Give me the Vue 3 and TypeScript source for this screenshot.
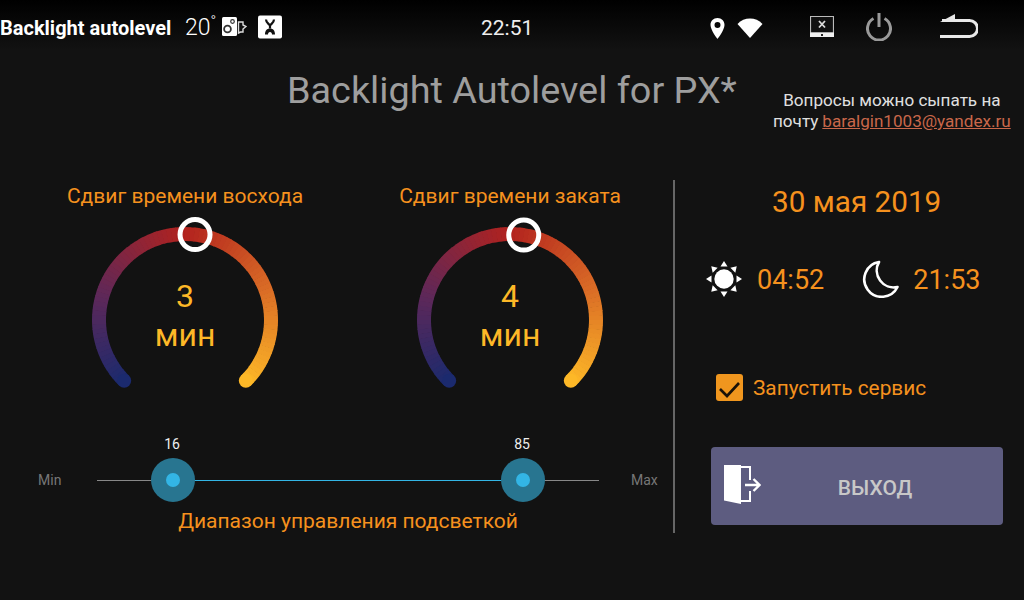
<script setup lang="ts">
interface Gauge {
  title: string;
  value: number;
  thumb: number;
}

const gauges: Gauge[] = [
  { title: 'Сдвиг времени восхода', value: 3, thumb: 6.7 },
  { title: 'Сдвиг времени заката', value: 4, thumb: 9.2 }
];

const CX = 100;
const CY = 100;
const R = 86;

const stops: [number, number[]][] = [
  [0, [27, 42, 110]],
  [0.22, [92, 40, 90]],
  [0.5, [178, 34, 30]],
  [0.75, [217, 106, 38]],
  [1, [253, 184, 39]]
];

function mix(t: number): string {
  for (let i = 1; i < stops.length; i++) {
    const [t1, c1] = stops[i];
    const [t0, c0] = stops[i - 1];
    if (t <= t1) {
      const k = (t - t0) / (t1 - t0);
      const c = c0.map((v, n) => Math.round(v + (c1[n] - v) * k));
      return `rgb(${c[0]},${c[1]},${c[2]})`;
    }
  }
  return 'rgb(253,184,39)';
}

function point(deg: number) {
  const a = (deg * Math.PI) / 180;
  return { x: CX + R * Math.sin(a), y: CY - R * Math.cos(a) };
}

const SEGMENTS = 90;
const segments = Array.from({ length: SEGMENTS }, (_, i) => {
  const from = -135 + (270 * i) / SEGMENTS;
  const to = -135 + (270 * (i + 1)) / SEGMENTS + 0.4;
  const a = point(from);
  const b = point(Math.min(to, 135));
  return {
    d: `M${a.x.toFixed(2)} ${a.y.toFixed(2)}A${R} ${R} 0 0 1 ${b.x.toFixed(2)} ${b.y.toFixed(2)}`,
    color: mix((i + 0.5) / SEGMENTS)
  };
});

const capStart = point(-135);
const capEnd = point(135);
const rays = [0, 45, 90, 135, 180, 225, 270, 315];
</script>

<template>
  <div class="screen">
    <header class="status">
      <span class="app-name">Backlight autolevel</span>
      <span class="temp">20<sup>°</sup></span>
      <svg width="25" height="24" viewBox="0 0 25 24">
        <rect x="0" y="2" width="15" height="19" rx="1.5" fill="#fff" />
        <circle cx="5.5" cy="14" r="3.4" fill="none" stroke="#333" stroke-width="1.8" />
        <circle cx="10.5" cy="6.5" r="1.8" fill="none" stroke="#333" stroke-width="1.2" />
        <path d="M16.5 7h4.500v3l3 1.500-3 2.500v3h-2.500l-2 1z" fill="#111" stroke="#ddd" stroke-width="1.4" />
      </svg>
      <svg class="ic-tool" width="24" height="24" viewBox="0 0 24 24">
        <rect y="0.5" width="24" height="23" rx="2" fill="#fff" />
        <path d="M8 4.500c0 3 2.500 4 4 6 1.500-2 4-3 4-6M12 10.500v3" fill="none" stroke="#111" stroke-width="2.200" />
        <path d="M7 19.500c0-4 2-6 5-6s5 2 5 6h-3c0-1.500-.8-2.500-2-2.500s-2 1-2 2.500z" fill="#111" />
      </svg>
      <span class="clock">22:51</span>
      <svg class="ic-pin" width="15" height="21" viewBox="0 0 15 21">
        <path fill-rule="evenodd" d="M7.500 0C3.400 0 .5 3 .5 7c0 5 7 14 7 14s7-9 7-14c0-4-2.900-7-7-7zM7.500 10a3 3 0 1 1 0-6 3 3 0 0 1 0 6z" fill="#fff" />
      </svg>
      <svg class="ic-wifi" width="26" height="20" viewBox="0 0 26 20">
        <path d="M13 20L.5 6C4 2.300 8.300.5 13 .5s9 1.800 12.500 5.500z" fill="#fff" />
      </svg>
      <svg class="ic-screen" width="24" height="21" viewBox="0 0 24 21">
        <path d="M.5.500h23V17H.5z" fill="#111" stroke="#bbb" stroke-width="1.200" />
        <path d="M0 16.500h24V21H0z" fill="#f0f0f0" />
        <path d="M11 18h2v2h-2z" fill="#222" />
        <path d="M9 5l6 6.500M15 5l-6 6.500" stroke="#ddd" stroke-width="1.800" />
      </svg>
      <svg class="ic-power" width="26" height="28" viewBox="0 0 26 28">
        <path d="M7.500 5.500a11.500 11.500 0 1 0 11 0" fill="none" stroke="#9a9a9a" stroke-width="3" />
        <path d="M13 0v14" stroke="#9a9a9a" stroke-width="3" />
      </svg>
      <svg class="ic-back" width="38" height="26" viewBox="0 0 38 26">
        <path d="M2 6.500h27.500a8 8 0 0 1 0 16H0" fill="none" stroke="#e8e8e8" stroke-width="3" />
        <path d="M15 0v8H0z" fill="#e8e8e8" />
      </svg>
    </header>

    <section class="head">
      <h1 class="title">Backlight Autolevel for PX*</h1>
      <div class="note">
        <span>Вопросы можно сыпать на</span>
        <div class="note-line">
          <span>почту</span>
          <a class="mail">baralgin1003@yandex.ru</a>
        </div>
      </div>
    </section>

    <main class="body">
      <div class="left">
        <div class="gauges">
          <div v-for="g in gauges" :key="g.title" class="gauge">
            <div class="label">{{ g.title }}</div>
            <div class="dial">
              <svg width="200" height="180" viewBox="0 0 200 180">
                <path v-for="(s, i) in segments" :key="i" :d="s.d" fill="none" :stroke="s.color" stroke-width="14" />
                <circle :cx="capStart.x" :cy="capStart.y" r="7" fill="#1b2a6e" />
                <circle :cx="capEnd.x" :cy="capEnd.y" r="7" fill="#fdb827" />
                <circle :cx="point(g.thumb).x" :cy="point(g.thumb).y" r="15" fill="none" stroke="#fff" stroke-width="5" />
              </svg>
              <div class="readout">
                <span class="num">{{ g.value }}</span>
                <span class="unit">мин</span>
              </div>
            </div>
          </div>
        </div>

        <div class="slider">
          <span class="end">Min</span>
          <div class="track">
            <div class="range"></div>
            <div class="thumb low"><span class="thumb-val">16</span></div>
            <div class="thumb high"><span class="thumb-val">85</span></div>
          </div>
          <span class="end max">Max</span>
        </div>
        <div class="label range-label">Диапазон управления подсветкой</div>
      </div>

      <aside class="right">
        <div class="date">30 мая 2019</div>
        <div class="times">
          <svg width="38" height="38" viewBox="0 0 38 38">
            <circle cx="19" cy="19" r="9.700" fill="#fff" />
            <g fill="#fff">
              <path v-for="a in rays" :key="a" d="M15.500 6.500L19 1l3.500 5.500z" :transform="`rotate(${a} 19 19)`" />
            </g>
          </svg>
          <span class="time">04:52</span>
          <svg class="moon" width="38" height="38" viewBox="0 0 38 38">
            <path d="M18 2A17.500 17.500 0 1 0 36.500 27 17 17 0 0 1 18 2z" fill="none" stroke="#fff" stroke-width="2.600" stroke-linejoin="round" />
          </svg>
          <span class="time">21:53</span>
        </div>
        <label class="service">
          <span class="check">
            <svg width="27" height="27" viewBox="0 0 27 27">
              <path d="M4 15l7 7 12-13" fill="none" stroke="#1a1208" stroke-width="2.600" />
            </svg>
          </span>
          Запустить сервис
        </label>
        <button class="exit">
          <svg class="door" width="38" height="40" viewBox="0 0 38 40">
            <path d="M1 0h17v39L1 35.500z" fill="#fff" />
            <path d="M17 2h10v13M27 26v10H18" fill="none" stroke="#fff" stroke-width="2" />
            <path d="M22 20h14M30.500 14l6 6-6 6" fill="none" stroke="#fff" stroke-width="2.400" />
          </svg>
          ВЫХОД
        </button>
      </aside>
    </main>
  </div>
</template>

<style>
html,
body {
  margin: 0;
  background: #121212;
}
</style>

<style scoped>
.screen {
  width: 1024px;
  height: 600px;
  background: #121212;
  font-family: Roboto, "Noto Sans", sans-serif;
  overflow: hidden;
  display: flex;
  flex-direction: column;
}

.status {
  height: 50px;
  box-sizing: border-box;
  padding-top: 4px;
  flex: none;
  display: flex;
  align-items: center;
  color: #fff;
  background: linear-gradient(#000, #121212);
}

.app-name {
  font-size: 20px;
  font-weight: 700;
  width: 185px;
  flex: none;
  white-space: nowrap;
  margin-top: 1px;
}

.temp {
  font-size: 23px;
  font-weight: 300;
  width: 37px;
  flex: none;
  margin-top: 1px;
}

.temp sup {
  font-size: 15px;
  line-height: 0;
}

.ic-tool {
  margin-left: 11px;
}

.clock {
  margin-left: 199px;
  margin-top: 2px;
  width: 52px;
  font-size: 21px;
  color: #eee;
}

.ic-pin {
  margin-left: 177px;
  margin-top: 2px;
}

.ic-wifi {
  margin-left: 12px;
  margin-top: 2px;
}

.ic-screen {
  margin-left: 47px;
  margin-top: -1px;
}

.ic-power {
  margin-left: 32px;
  margin-top: -1px;
}

.ic-back {
  margin-left: 48px;
}

.head {
  height: 130px;
  flex: none;
  display: flex;
  align-items: flex-start;
}

.title {
  margin: 18px 0 0 287px;
  font-size: 37.800px;
  font-weight: 400;
  line-height: 44px;
  color: #9e9e9e;
  white-space: nowrap;
}

.note {
  margin: 40px 0 0 35px;
  width: 240px;
  display: flex;
  flex-direction: column;
  align-items: center;
  font-size: 17.100px;
  line-height: 21px;
  color: #e0e0e0;
}

.note-line {
  display: flex;
  gap: 4px;
}

.mail {
  color: #c9674a;
  text-decoration: underline;
}

.body {
  flex: 1;
  display: flex;
  align-items: flex-start;
}

.left {
  width: 673px;
  flex: none;
  box-sizing: border-box;
  display: flex;
  flex-direction: column;
}

.gauges {
  display: flex;
  width: 100%;
  padding-left: 85px;
  box-sizing: border-box;
  gap: 125px;
}

.gauge {
  width: 200px;
  display: flex;
  flex-direction: column;
  align-items: center;
}

.label {
  font-size: 21px;
  line-height: 32px;
  color: #f5911e;
  white-space: nowrap;
}

.dial {
  position: relative;
  margin-top: 8px;
  height: 180px;
}

.dial svg {
  display: block;
  overflow: visible;
}

.readout {
  position: absolute;
  left: 0;
  right: 0;
  top: 56px;
  display: flex;
  flex-direction: column;
  align-items: center;
  color: #fdb827;
  font-size: 32px;
  line-height: 40px;
}

.unit {
  margin-top: -1px;
}

.slider {
  margin-top: 58px;
  height: 44px;
  display: flex;
  align-items: center;
  padding-left: 38px;
}

.end {
  width: 22px;
  font-size: 14px;
  color: #777;
}

.max {
  width: 30px;
  margin-left: 32px;
}

.track {
  position: relative;
  margin-left: 37px;
  width: 502px;
  height: 1px;
  background: #888;
}

.range {
  position: absolute;
  left: 76px;
  width: 350px;
  top: 0;
  height: 1px;
  background: #33b5e5;
}

.thumb {
  position: absolute;
  top: -22px;
  width: 44px;
  height: 44px;
  border-radius: 50%;
  background: #287590;
}

.thumb::after {
  content: "";
  position: absolute;
  left: 15px;
  top: 15px;
  width: 14px;
  height: 14px;
  border-radius: 50%;
  background: #33b5e5;
}

.low {
  left: 54px;
}

.high {
  left: 404px;
}

.thumb-val {
  position: absolute;
  left: -2px;
  right: 0;
  top: -24px;
  text-align: center;
  font-size: 14px;
  line-height: 20px;
  color: #eee;
}

.range-label {
  margin-top: 3px;
  text-align: center;
  width: 696px;
}

.right {
  flex: 1;
  height: 353px;
  border-left: 2px solid #666;
  box-sizing: border-box;
  display: flex;
  flex-direction: column;
}

.date {
  margin: 2px 0 0 97px;
  font-size: 29.700px;
  line-height: 40px;
  color: #f5911e;
}

.times {
  margin: 38px 0 0 30px;
  display: flex;
  align-items: center;
  color: #f5911e;
}

.time {
  margin-left: 14px;
  margin-top: 2px;
  font-size: 27px;
}

.moon {
  margin-left: 37px;
}

.service {
  margin: 76px 0 0 41px;
  display: flex;
  align-items: center;
  gap: 10px;
  font-size: 20.800px;
  color: #f5911e;
}

.check {
  width: 27px;
  height: 27px;
  border-radius: 3px;
  background: #f0961e;
}

.check svg {
  display: block;
}

.exit {
  position: relative;
  margin: 46px 0 0 36px;
  width: 292px;
  height: 78px;
  border: 0;
  border-radius: 4px;
  background: #5d5c80;
  color: #c8c8c8;
  font-family: inherit;
  font-size: 21px;
  font-weight: 500;
  padding: 4px 0 0 36px;
}

.door {
  position: absolute;
  left: 12px;
  top: 18px;
}
</style>
